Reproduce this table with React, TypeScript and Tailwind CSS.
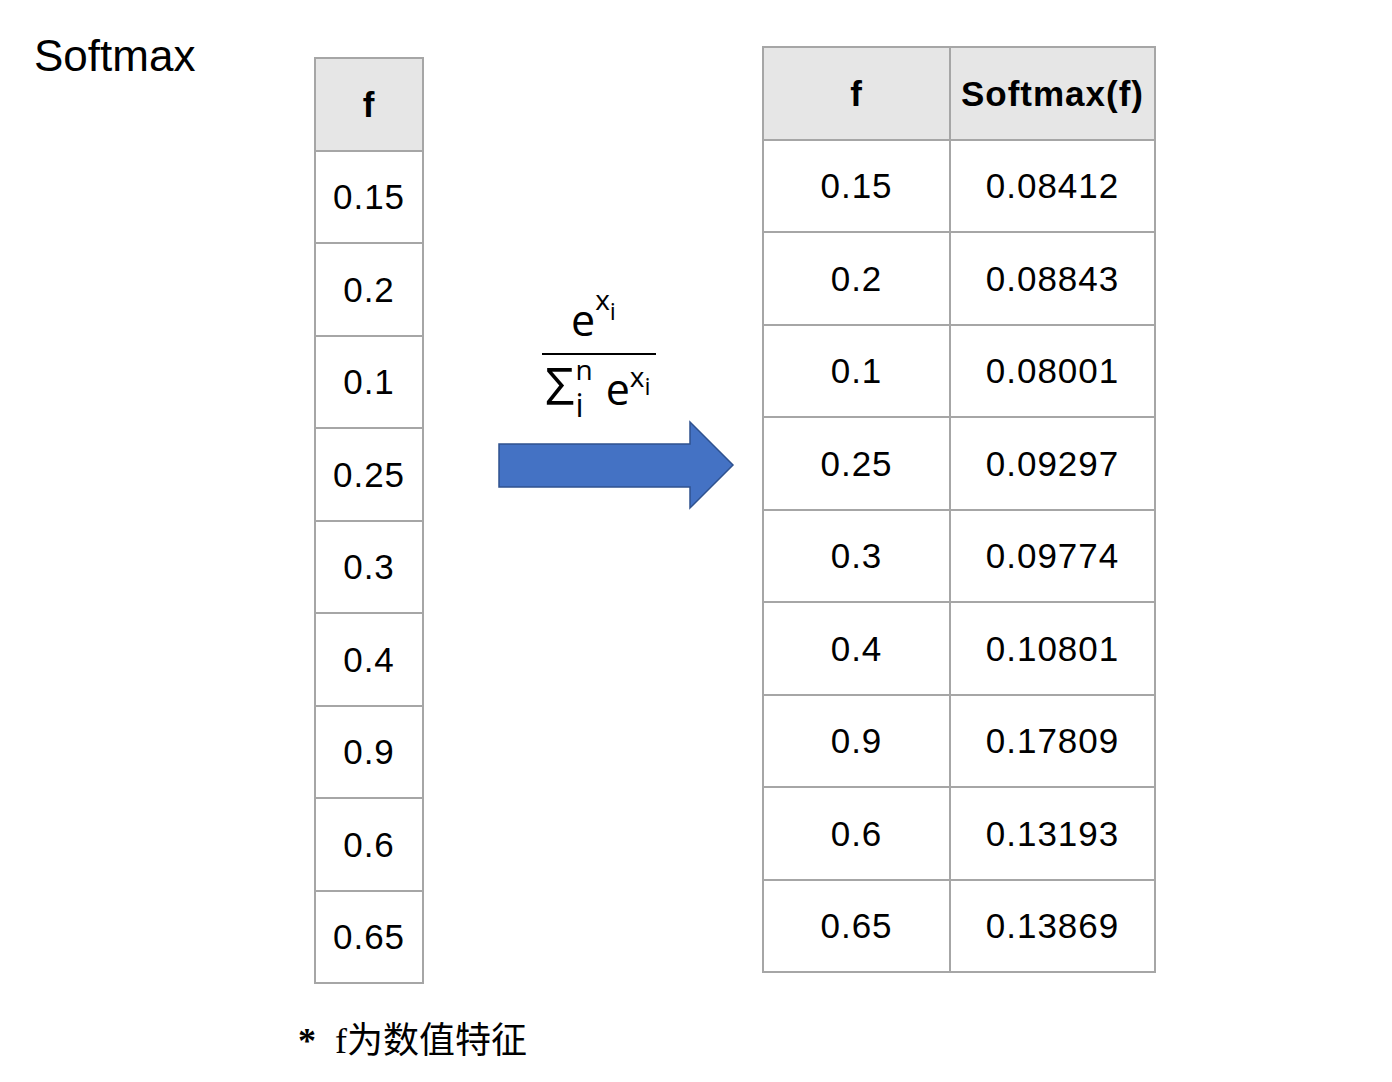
import React from "react";

const leftValues = ["0.15", "0.2", "0.1", "0.25", "0.3", "0.4", "0.9", "0.6", "0.65"];

const softmaxRows = [
  ["0.15", "0.08412"],
  ["0.2", "0.08843"],
  ["0.1", "0.08001"],
  ["0.25", "0.09297"],
  ["0.3", "0.09774"],
  ["0.4", "0.10801"],
  ["0.9", "0.17809"],
  ["0.6", "0.13193"],
  ["0.65", "0.13869"],
];

const cellText = "text-[35px] leading-none tracking-[1px] text-black";
const headText = "text-[35px] leading-none tracking-[1px] font-bold text-black";

// e^{x_i} / sum_i^n e^{x_i}
const Formula = () => (
  <div className="ml-[118px] mt-[285px] w-[114px] font-['Open_Sans',sans-serif] font-medium text-black">
    {/* numerator */}
    <div className="flex items-start h-[68px] pl-[29px]">
      <span className="mt-[13px] text-[43px] leading-none">e</span>
      <span className="text-[28px] leading-none">x</span>
      <span className="mt-[14px] text-[24px] leading-none">i</span>
    </div>

    <div className="h-[2px] w-[114px] bg-black" />

    {/* denominator */}
    <div className="flex items-start h-[64px] pl-[3px]">
      <span className="mt-[4px] text-[52px] leading-none">Σ</span>
      <div className="flex flex-col ml-[1px]">
        <span className="text-[28px] leading-[28px]">n</span>
        <span className="mt-[10px] text-[32px] leading-[24px]">i</span>
      </div>
      <span className="ml-[13px] mt-[12px] text-[43px] leading-none">e</span>
      <span className="mt-[7px] text-[28px] leading-none">x</span>
      <span className="mt-[19px] text-[24px] leading-none">i</span>
    </div>
  </div>
);

const Arrow = () => (
  <svg width="240" height="92" viewBox="0 0 240 92" className="ml-[73px] block">
    <polygon
      points="2,25 193,25 193,3 236,46 193,89 193,68 2,68"
      fill="#4472c4"
      stroke="#2f528f"
      strokeWidth="1.5"
    />
  </svg>
);

const App = () => {
  return (
    <div className="flex items-start w-[1392px] h-[1082px] bg-white overflow-hidden font-['Liberation_Sans',Arial,sans-serif]">
      {/* Title */}
      <div className="w-[298px] shrink-0 pl-[34px] pt-[34px]">
        <h1 className="text-[44px] leading-none text-black">Softmax</h1>
      </div>

      {/* Input column + footnote */}
      <div className="w-[126px] shrink-0 flex flex-col pt-[57px]">
        <div className="ml-[16px] w-[110px] border-2 border-[#a6a6a6]">
          <div className="h-[90.5px] flex items-center justify-center bg-[#e6e6e6]">
            <span className={headText}>f</span>
          </div>
          {leftValues.map((v, i) => (
            <div
              key={i}
              className="h-[92.5px] border-t-2 border-[#a6a6a6] flex items-center justify-center"
            >
              <span className={cellText}>{v}</span>
            </div>
          ))}
        </div>
        <div className="mt-[39px] flex items-start whitespace-nowrap text-[36px] leading-none text-black font-['Liberation_Serif','Noto_Sans_CJK_SC',serif]">
          <span className="font-bold">*</span>
          <span className="ml-[19px]">f为数值特征</span>
        </div>
      </div>

      {/* Formula + arrow */}
      <div className="w-[338px] shrink-0 flex flex-col">
        <Formula />
        <Arrow />
      </div>

      {/* Result table */}
      <div className="shrink-0 pt-[46px]">
        <div className="w-[394px] border-2 border-[#a6a6a6]">
          <div className="flex h-[90.5px] bg-[#e6e6e6]">
            <div className="w-[185px] flex items-center justify-center">
              <span className={headText}>f</span>
            </div>
            <div className="flex-1 border-l-2 border-[#a6a6a6] flex items-center justify-center">
              <span className={headText}>Softmax(f)</span>
            </div>
          </div>
          {softmaxRows.map(([f, s], i) => (
            <div key={i} className="flex h-[92.5px] border-t-2 border-[#a6a6a6]">
              <div className="w-[185px] flex items-center justify-center">
                <span className={cellText}>{f}</span>
              </div>
              <div className="flex-1 border-l-2 border-[#a6a6a6] flex items-center justify-center">
                <span className={cellText}>{s}</span>
              </div>
            </div>
          ))}
        </div>
      </div>
    </div>
  );
};

export default App;
